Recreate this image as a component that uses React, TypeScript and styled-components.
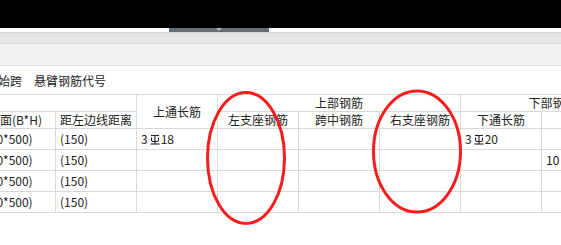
import React from 'react';
import styled, { createGlobalStyle } from 'styled-components';

const GlobalStyle = createGlobalStyle`
  html, body {
    margin: 0;
    padding: 0;
    background: #ffffff;
    font-family: "Noto Sans CJK SC", "Noto Sans", sans-serif;
    overflow: hidden;
  }
`;

const Page = styled.div`
  position: relative;
  width: 561px;
  height: 245px;
  overflow: hidden;
  background: #ffffff;
`;

const TopBar = styled.div`
  height: 28px;
  background: #000000;
`;

const TabStrip = styled.div`
  height: 4px;
  background: #ffffff;
  display: flex;
  padding-left: 169px;
`;

const Tab = styled.div`
  width: 100px;
  height: 4px;
  background: #646e79;
  display: flex;
  justify-content: center;
`;

const TabArrow = styled.div`
  width: 0;
  height: 0;
  border-left: 3px solid transparent;
  border-right: 3px solid transparent;
  border-top: 3px solid #b6bcc4;
`;

const Band = styled.div<{ $h: number; $bg: string }>`
  height: ${p => p.$h}px;
  background: ${p => p.$bg};
  border-top: 1px solid #d6d6d6;
`;

const Toolbar = styled.div`
  height: 28px;
  border-top: 1px solid #dcdcdc;
  display: flex;
  align-items: center;
  gap: 12px;
  font-size: 12px;
  color: #222;
  margin-left: -2px;
`;

const TableWrap = styled.div`
  overflow: hidden;
`;

const Grid = styled.table`
  border-collapse: collapse;
  table-layout: fixed;
  margin-left: -26px;
  font-size: 12px;
  color: #222;
`;

const HeadCell = styled.th`
  border: 1px solid #d9d9d9;
  font-weight: normal;
  height: 16px;
  padding: 0;
  text-align: center;
  white-space: nowrap;
  overflow: hidden;
  line-height: 16px;
`;

const Cell = styled.td`
  border: 1px solid #d9d9d9;
  height: 20px;
  padding: 0 4px;
  text-align: left;
  white-space: nowrap;
  overflow: hidden;
  line-height: 20px;
`;

const Overlay = styled.svg`
  position: absolute;
  left: 0;
  top: 0;
  pointer-events: none;
`;

const Steel = () => (
  <svg width="10" height="11" viewBox="0 0 10 11" style={{ margin: '0 1px 0 2px', verticalAlign: '-1px' }}>
    <g stroke="#222" strokeWidth="1.1" fill="none">
      <line x1="1" y1="1.5" x2="9" y2="1.5" />
      <line x1="0.5" y1="10" x2="9.5" y2="10" />
      <line x1="5" y1="1.5" x2="5" y2="10" />
      <path d="M1.5 3.5 V6 Q1.5 7.5 3 7.5 H7 Q8.5 7.5 8.5 6 V3.5" />
    </g>
  </svg>
);

const Bar: React.FC<{ n: number; d: number }> = ({ n, d }) => (
  <span>
    {n}
    <Steel />
    {d}
  </span>
);

const widths = [81, 81, 81, 81, 81, 81, 81, 103];

const rows: Array<Array<React.ReactNode>> = [
  ['(300*500)', '(150)', <Bar n={3} d={18} />, '', '', '', <Bar n={3} d={20} />, ''],
  ['(300*500)', '(150)', '', '', '', '', '', '10'],
  ['(300*500)', '(150)', '', '', '', '', '', ''],
  ['(300*500)', '(150)', '', '', '', '', '', ''],
];

export default function App() {
  return (
    <Page>
      <GlobalStyle />
      <TopBar />
      <TabStrip>
        <Tab>
          <TabArrow />
        </Tab>
      </TabStrip>
      <Band $h={10} $bg="#e6e6e6" />
      <Band $h={21} $bg="#f2f2f2" />
      <Toolbar>
        <span>始跨</span>
        <span>悬臂钢筋代号</span>
      </Toolbar>
      <TableWrap>
        <Grid style={{ width: widths.reduce((a, b) => a + b, 0) }}>
          <colgroup>
            {widths.map((w, i) => (
              <col key={i} style={{ width: w }} />
            ))}
          </colgroup>
          <thead>
            <tr>
              <HeadCell colSpan={2} />
              <HeadCell rowSpan={2}>上通长筋</HeadCell>
              <HeadCell colSpan={3}>上部钢筋</HeadCell>
              <HeadCell colSpan={2}>下部钢筋</HeadCell>
            </tr>
            <tr>
              <HeadCell>截面(B*H)</HeadCell>
              <HeadCell>距左边线距离</HeadCell>
              <HeadCell>左支座钢筋</HeadCell>
              <HeadCell>跨中钢筋</HeadCell>
              <HeadCell>右支座钢筋</HeadCell>
              <HeadCell>下通长筋</HeadCell>
              <HeadCell />
            </tr>
          </thead>
          <tbody>
            {rows.map((r, i) => (
              <tr key={i}>
                {r.map((c, j) => (
                  <Cell key={j}>{c}</Cell>
                ))}
              </tr>
            ))}
          </tbody>
        </Grid>
      </TableWrap>
      <Overlay width="561" height="245">
        <ellipse cx="246" cy="158" rx="38.5" ry="65.5" stroke="#f51d1d" strokeWidth="3" fill="none" />
        <ellipse cx="417" cy="151.5" rx="43.5" ry="60.5" stroke="#f51d1d" strokeWidth="3" fill="none" />
      </Overlay>
    </Page>
  );
}
